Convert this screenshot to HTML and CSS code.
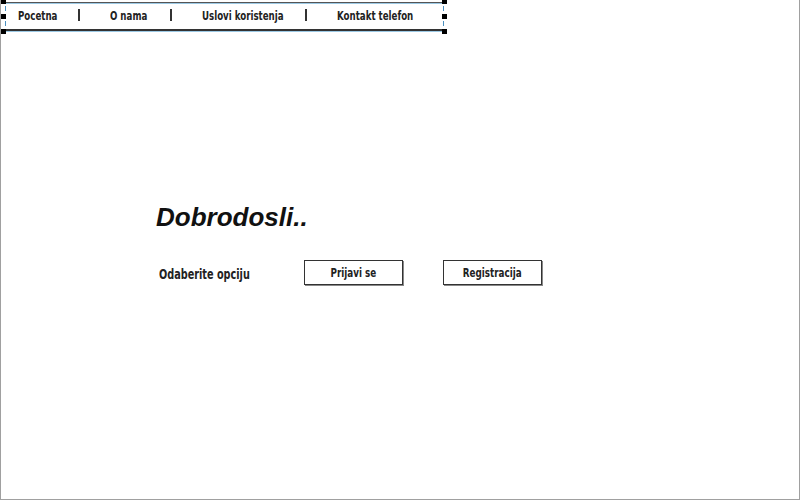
FILE: index.html
```html
<!DOCTYPE html>
<html>
<head>
<meta charset="utf-8">
<link rel="stylesheet" href="styles.css">
</head>
<body>
<div class="page">
  <div class="navwrap">
    <nav class="nav">
      <span class="item i1">Pocetna</span>
      <span class="sep s1"></span>
      <span class="item i2">O nama</span>
      <span class="sep s2"></span>
      <span class="item i3">Uslovi koristenja</span>
      <span class="sep s3"></span>
      <span class="item i4">Kontakt telefon</span>
    </nav>
    <span class="h hl ht"></span><span class="h hl hm"></span><span class="h hl hb"></span>
    <span class="h hr ht"></span><span class="h hr hm"></span><span class="h hr hb"></span>
    <span class="tick tl1"></span><span class="tick tl2"></span>
    <span class="tick tr1"></span><span class="tick tr2"></span>
  </div>
  <main class="main">
    <h1 class="title">Dobrodosli..</h1>
    <div class="row">
      <span class="label"><span class="narrow">Odaberite opciju</span></span>
      <button class="btn b1"><span class="narrow">Prijavi se</span></button>
      <button class="btn b2"><span class="narrow">Registracija</span></button>
    </div>
  </main>
</div>
</body>
</html>
```

FILE: styles.css
```css
html, body { margin: 0; padding: 0; background: #fff; }
.page {
  width: 800px; height: 500px; box-sizing: border-box;
  border: 1px solid #a0a0a0; border-top: none;
  position: relative; overflow: hidden;
  font-family: "DejaVu Sans Condensed", "DejaVu Sans", sans-serif;
  color: #222;
}
.navwrap { position: relative; width: 446px; height: 35px; }
.nav {
  position: absolute; left: 5px; top: 2px; width: 436px; height: 26px;
  border-top: 1px solid #555; border-bottom: 2px solid #333;
  box-shadow: inset 0 1px 0 #9cc9e4, 0 1px 0 #9cc9e4;
  font-weight: bold; font-size: 12.5px;
}
.item {
  position: absolute; top: 5px; white-space: nowrap;
  display: inline-block; transform: scaleX(0.77); transform-origin: 0 50%;
}
.sep { position: absolute; top: 6px; width: 2px; height: 12px; background: #333; }
.i1 { left: 12px; }
.s1 { left: 72px; }
.i2 { left: 104px; }
.s2 { left: 164px; }
.i3 { left: 196px; }
.s3 { left: 299px; }
.i4 { left: 331px; }
.h { position: absolute; width: 5px; height: 5px; background: #000; }
.hl { left: 0; }
.hr { left: 441px; }
.ht { top: 0; height: 4px; }
.hm { top: 14px; }
.hb { top: 29px; }
.tick { position: absolute; width: 1px; height: 5px; background: #4a90c0; }
.tl1 { left: 4px; top: 6px; }
.tl2 { left: 4px; top: 21px; }
.tr1 { left: 442px; top: 6px; }
.tr2 { left: 442px; top: 21px; }
.main { padding: 167px 0 0 155px; }
.title {
  margin: 0; font-family: "Liberation Sans", Arial, sans-serif;
  font-style: italic; font-weight: bold; font-size: 26px; color: #111;
  line-height: 30px;
}
.row { display: flex; align-items: center; margin-top: 27px; height: 26px; }
.narrow { display: inline-block; transform: scaleX(0.77); white-space: nowrap; }
.label {
  font-weight: bold; font-size: 14px; margin-left: 3px; width: 145px;
  padding-top: 4px;
}
.label .narrow { transform-origin: 0 50%; }
.btn {
  font-family: inherit; font-weight: bold; font-size: 13px; color: #222;
  width: 99px; height: 25px; box-sizing: border-box; padding: 0;
  background: #fff; border: 1px solid #333;
  box-shadow: 1px 1px 0 #888;
  display: flex; align-items: center; justify-content: center;
}
.btn .narrow { transform: scaleX(0.75); }
.b2 { margin-left: 40px; }
```
